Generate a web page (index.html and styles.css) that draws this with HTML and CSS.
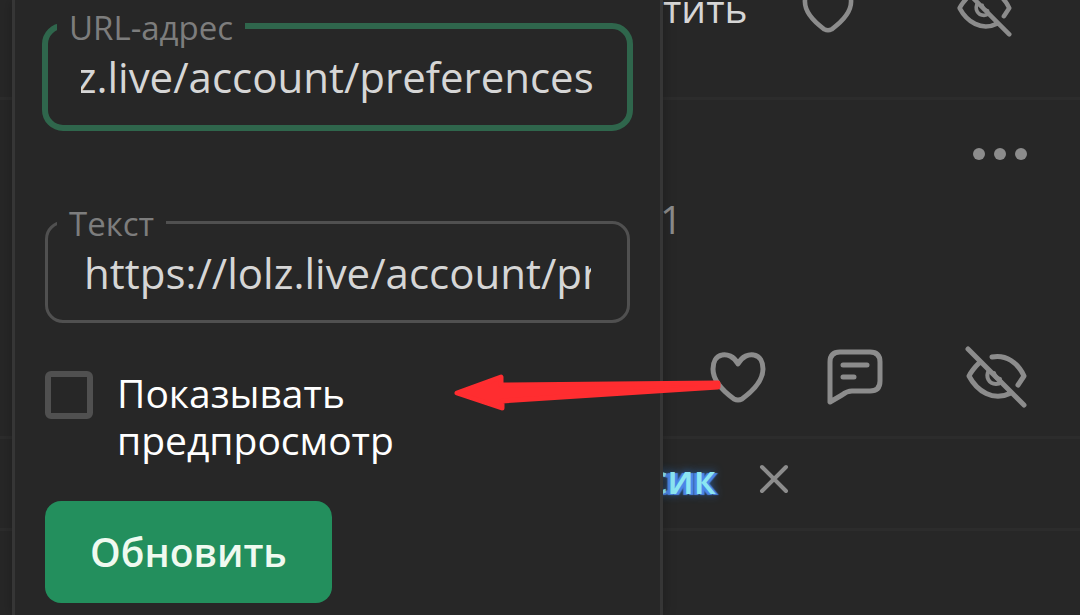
FILE: index.html
```html
<!DOCTYPE html>
<html lang="ru">
<head>
	<meta charset="utf-8">
	<meta name="viewport" content="width=device-width, initial-scale=1">
	<title>Вставка ссылки</title>
	<link rel="stylesheet" href="styles.css">
</head>
<body>
	<svg class="sprite" aria-hidden="true">
		<symbol id="heart" viewBox="0 0 56 52">
			<path d="M28 13C24 5 17 3 12 4C6 5 3 11 3 18C3 29 13 40 24 48Q28 50 32 48C43 40 53 29 53 18C53 11 50 5 44 4C39 3 32 5 28 13Z"/>
		</symbol>
		<symbol id="eye-off" viewBox="0 0 62 62">
			<path d="M3 3L59 59M14 17C10 21 6 26 4 30C12 45 28 56 46 47M27 11C41 8 53 17 59 30L53 39"/>
			<path stroke-width="4" d="M24 24C20 31 24 38 31 38Q34 38 36 36M29 27Q30 32 35 33"/>
		</symbol>
		<symbol id="comment" viewBox="0 0 56 56">
			<path d="M3 53V13Q3 3 13 3H43Q53 3 53 13V32Q53 42 43 42H25Q20 42 15 46ZM16 16H40M16 28H27"/>
		</symbol>
	</svg>

	<main class="feed">
		<article class="post post-first">
			<a class="reply" href="#">тить</a>
			<button class="icon like" aria-label="Нравится"><svg><use href="#heart"/></svg></button>
			<button class="icon hide" aria-label="Скрыть"><svg><use href="#eye-off"/></svg></button>
		</article>

		<article class="post post-second">
			<button class="more" aria-label="Ещё"><i></i><i></i><i></i></button>
			<span class="count">1</span>
			<div class="actions">
				<button class="icon like" aria-label="Нравится"><svg><use href="#heart"/></svg></button>
				<button class="icon talk" aria-label="Комментировать"><svg><use href="#comment"/></svg></button>
				<button class="icon hide" aria-label="Скрыть"><svg><use href="#eye-off"/></svg></button>
			</div>
		</article>

		<div class="quote">
			<a class="nick" href="#">сик</a>
			<button class="icon close" aria-label="Закрыть">
				<svg viewBox="0 0 30 30"><path d="M3 3L27 27M27 3L3 27"/></svg>
			</button>
		</div>
	</main>

	<form class="dialog">
		<fieldset class="field active">
			<legend><label for="url">URL-адрес</label></legend>
			<input id="url" type="text" value="https://lolz.live/account/preferences">
		</fieldset>
		<fieldset class="field">
			<legend><label for="text">Текст</label></legend>
			<input id="text" type="text" value="https://lolz.live/account/preferences">
		</fieldset>
		<div class="check">
			<input id="preview" type="checkbox">
			<label for="preview">Показывать предпросмотр</label>
		</div>
		<button class="submit" type="button">Обновить</button>
	</form>

	<svg class="arrow" viewBox="0 0 270 40" aria-hidden="true">
		<path d="M4 20L48 4V12L265 10V14L49 28V35Z"/>
	</svg>

	<script>
		// Показываем конец адреса
		var url = document.getElementById('url');
		url.scrollLeft = url.scrollWidth;
	</script>
</body>
</html>
```
FILE: styles.css
```css
* {
	box-sizing: border-box;
}

body {
	margin: 0;
	height: 100vh;
	position: relative;
	overflow: hidden;
	background: #272727;
	color: #d6d6d6;
	font-family: "Open Sans", "Noto Sans", sans-serif;
	font-size: 39px;
	line-height: 47px;
}

button, input {
	font: inherit;
	color: inherit;
}

button {
	padding: 0;
	border: 0;
	background: none;
	cursor: pointer;
}

a {
	color: inherit;
	text-decoration: none;
}

.sprite {
	display: none;
}

/* Лента */
.feed {
	margin-top: -19px;
}

.post, .quote {
	display: flex;
	padding-left: 663px;
	border-bottom: 3px solid #2c2c2c;
}

.icon {
	display: block;
	flex: none;
	color: #8c8c8c;
}

.icon svg {
	display: block;
	width: 100%;
	height: 100%;
	fill: none;
	stroke: currentColor;
	stroke-width: 5px;
	stroke-linecap: round;
	stroke-linejoin: round;
}

.like {
	width: 56px;
	height: 52px;
}

.talk {
	width: 56px;
	height: 56px;
}

.hide {
	width: 62px;
	height: 62px;
}

.post-first {
	align-items: flex-end;
	padding-right: 68px;
	padding-bottom: 60px;
}

.post-first .reply {
	margin-right: auto;
	padding-bottom: 6px;
}

.post-first .like {
	width: 52px;
	height: 48px;
	margin-bottom: 4px;
	margin-right: 102px;
}

.post-first .hide {
	width: 56px;
	height: 56px;
}

.post-second {
	flex-direction: column;
	padding-top: 48px;
	padding-right: 53px;
	padding-bottom: 28px;
	padding-left: 660px;
}

.more {
	display: flex;
	gap: 9px;
	align-self: flex-end;
}

.more i {
	width: 12px;
	height: 12px;
	border-radius: 50%;
	background: #8c8c8c;
}

.count {
	margin-top: 35px;
	margin-bottom: 104px;
	color: #8c8c8c;
}

.actions {
	display: flex;
	align-items: center;
	justify-content: flex-end;
}

.actions .talk {
	margin: 0 82px 0 61px;
}

.quote {
	align-items: center;
	gap: 43px;
	padding: 16px 0 26px 648px;
}

.nick {
	color: #8ce6f2;
	font-weight: 600;
	text-shadow: 3px 1px 1px #4c86e8, -3px 1px 1px #4c86e8, 0 0 10px #2f80e0;
}

.close {
	width: 30px;
	height: 30px;
}

.close svg {
	stroke-width: 4px;
}

/* Окно */
.dialog {
	position: absolute;
	top: 0;
	bottom: 0;
	left: 12px;
	right: 417px;
	padding: 4px 30px 0;
	border: solid #363636;
	border-width: 0 3px;
	background: #272727;
	box-shadow: 0 0 12px rgba(0, 0, 0, .25);
}

.field {
	min-width: 0;
	margin: 0 0 48px;
	padding: 0 36px 20px;
	border: 3px solid #505050;
	border-radius: 18px;
}

.field.active {
	margin: 0 -3px 69px;
	padding: 0 33px 21px;
	border: 6px solid #2f664c;
	border-radius: 21px;
}

.field legend {
	margin-left: -27px;
	padding: 4px 12px 0;
	color: #7d7d7d;
	font-size: 33px;
	line-height: 40px;
}

.field.active legend {
	margin-left: -24px;
}

.field input {
	display: block;
	width: 100%;
	height: 56px;
	padding: 0;
	border: 0;
	outline: 0;
	background: none;
	font-size: 42px;
}

.check {
	display: flex;
	align-items: flex-end;
	gap: 24px;
	margin-bottom: 38px;
	color: #fff;
}

.check input {
	appearance: none;
	flex: none;
	align-self: flex-start;
	width: 48px;
	height: 48px;
	margin: 0;
	border: 6px solid #505050;
	border-radius: 6px;
}

.check label {
	max-width: 320px;
	margin-top: -2px;
}

.submit {
	padding: 27px 45px 28px;
	border-radius: 16px;
	background: #238f5d;
	color: #effaf0;
	font-weight: 600;
}

/* Стрелка-указатель поверх окна */
.arrow {
	position: absolute;
	top: 373px;
	left: 453px;
	width: 270px;
	height: 40px;
	fill: #ff2d30;
	stroke: #ff2d30;
	stroke-width: 5px;
	stroke-linejoin: round;
}
```
